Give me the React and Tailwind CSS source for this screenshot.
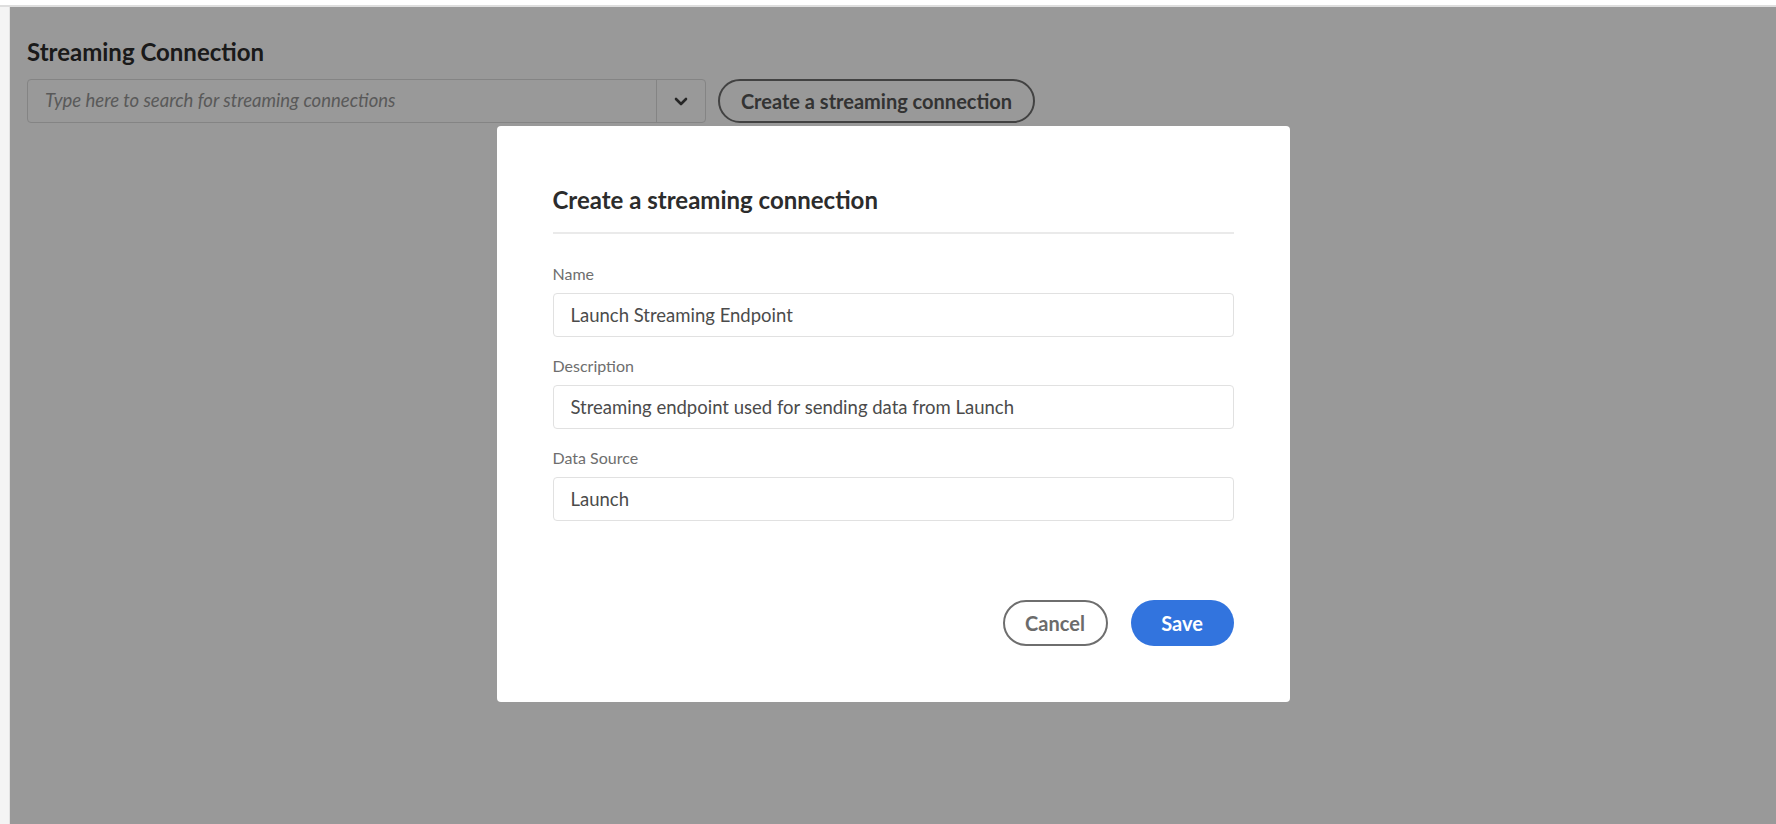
import { useState } from 'react';

function Chevron() {
  return (
    <svg width="14" height="9" viewBox="0 0 14 9" fill="none">
      <path d="M2 2l5 5 5-5" stroke="#404040" strokeWidth="2.6" strokeLinecap="round" strokeLinejoin="round" />
    </svg>
  );
}

function Field({ label, value }) {
  return (
    <div className="flex flex-col">
      <label className="text-[16px] leading-5 text-[#6e6e6e] mb-[9px]">{label}</label>
      <input
        readOnly
        value={value}
        className="h-[44px] w-full rounded-[4px] border border-[#e1e1e1] bg-white px-[17px] text-[18.5px] text-[#4b4b4b] outline-none"
      />
    </div>
  );
}

export default function App() {
  const [search, setSearch] = useState('');

  return (
    <div className="h-[824px] w-full overflow-hidden bg-white font-['Lato',sans-serif] flex flex-col">
      <div className="h-[7px] shrink-0 bg-white border-b-2 border-[#dedede]" />
      <div className="flex flex-1 min-h-0">
        <div className="w-[10px] shrink-0 bg-[#f4f4f4] border-r border-[#e3e3e3]" />
        <div className="relative flex-1 bg-white">
          <div className="px-[17px] pt-[31px]">
            <h1 className="text-[24px] leading-7 font-bold text-[#2c2c2c]">Streaming Connection</h1>
            <div className="mt-[13px] flex items-center gap-[12px]">
              <div className="flex h-[44px] w-[679px] rounded-[4px] border border-[#dcdcdc]">
                <input
                  value={search}
                  onChange={(e) => setSearch(e.target.value)}
                  placeholder="Type here to search for streaming connections"
                  className="flex-1 bg-transparent px-[17px] text-[18.5px] italic text-[#4b4b4b] placeholder:text-[#959595] outline-none"
                />
                <button className="w-[49px] flex items-center justify-center border-l border-[#dcdcdc]">
                  <Chevron />
                </button>
              </div>
              <button className="h-[44px] w-[317px] rounded-full border-2 border-[#6e6e6e] text-[20px] font-bold text-[#555555]">
                Create a streaming connection
              </button>
            </div>
          </div>

          <div className="absolute inset-0 bg-black/40 flex justify-center pt-[119px]">
            <div className="w-[793px] h-[576px] rounded-[4px] bg-white px-[56px] pt-[58px] pb-[56px] flex flex-col">
              <h2 className="text-[24px] leading-8 font-bold text-[#2c2c2c]">Create a streaming connection</h2>
              <div className="mt-[16px] h-[2px] bg-[#eaeaea]" />
              <div className="mt-[30px] flex flex-col gap-[19px]">
                <Field label="Name" value="Launch Streaming Endpoint" />
                <Field label="Description" value="Streaming endpoint used for sending data from Launch" />
                <Field label="Data Source" value="Launch" />
              </div>
              <div className="mt-auto flex justify-end gap-[23px]">
                <button className="h-[46px] w-[105px] rounded-full border-2 border-[#6e6e6e] text-[20px] font-bold text-[#6b6b6b]">
                  Cancel
                </button>
                <button className="h-[46px] w-[103px] rounded-full bg-[#3274de] text-[20px] font-bold text-white">
                  Save
                </button>
              </div>
            </div>
          </div>
        </div>
      </div>
    </div>
  );
}
